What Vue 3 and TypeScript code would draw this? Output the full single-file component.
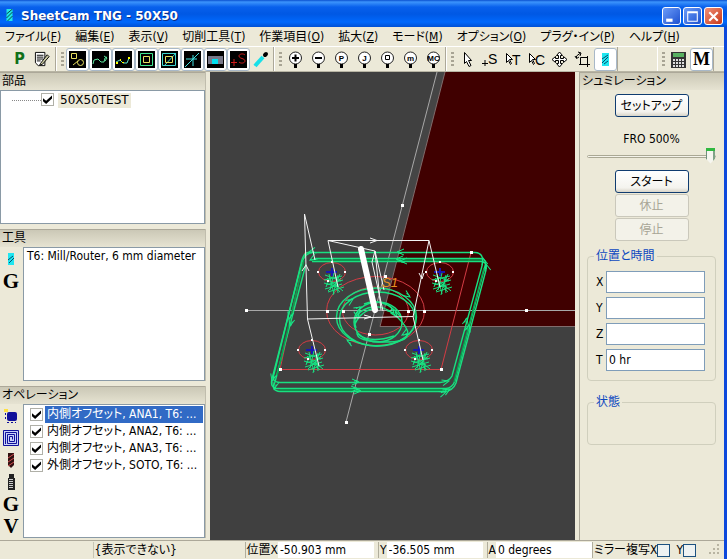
<script setup lang="ts">
import { ref } from 'vue'

interface MenuEntry { label: string; key: string }
interface Operation { label: string; on: boolean }

const menus: MenuEntry[] = [
  { label: 'ファイル', key: 'F' },
  { label: '編集', key: 'E' },
  { label: '表示', key: 'V' },
  { label: '切削工具', key: 'T' },
  { label: '作業項目', key: 'O' },
  { label: '拡大', key: 'Z' },
  { label: 'モード', key: 'M' },
  { label: 'オプション', key: 'O' },
  { label: 'プラグ・イン', key: 'P' },
  { label: 'ヘルプ', key: 'H' },
]
const toggles = ['shapes', 'path', 'pathpoints', 'offset', 'offsetcut', 'direction', 'material', 'start']
const zooms = ['+', '−', 'P', 'J', '□', 'm', 'MC']

const partOn = ref(true)
const selected = ref(0)
const operations = ref<Operation[]>([
  { label: '内側オフセット, ANA1, T6: ...', on: true },
  { label: '内側オフセット, ANA2, T6: ...', on: true },
  { label: '内側オフセット, ANA3, T6: ...', on: true },
  { label: '外側オフセット, SOTO, T6: ...', on: true },
])
const fro = ref(500)
const axes = ref([
  { name: 'X', value: '' },
  { name: 'Y', value: '' },
  { name: 'Z', value: '' },
  { name: 'T', value: '0 hr' },
])
const posX = ref('-50.903 mm')
const posY = ref('-36.505 mm')
const posA = ref('0 degrees')
const mirrorX = ref(false)
const mirrorY = ref(false)

const holes = [
  { x: 332, y: 272 },
  { x: 440, y: 272 },
  { x: 312, y: 350 },
  { x: 419, y: 350 },
]
const plunge =
  'M-7 3L9 9M-8 8L10 4M-6 13L11 8M-7 17L10 12M-4 20L12 15M-3 2L2 22M2 1L-2 18M6 3L1 23M9 6L-4 19M-5 6L8 20M-8 11L7 15M4 5L6 21M0 10L11 19M-2 5L-6 15M8 2L3 14'

// Arrow heads of the tool path: position and heading in degrees
const arrows = [
  { x: 397, y: 252, a: 180 }, { x: 396, y: 259, a: 180 }, { x: 400, y: 261, a: 180 },
  { x: 359, y: 382, a: 0 }, { x: 358, y: 389, a: 0 }, { x: 361, y: 391, a: 0 },
  { x: 449, y: 381, a: -15 }, { x: 450, y: 389, a: -30 }, { x: 446, y: 392, a: -20 },
  { x: 467, y: 318, a: -76 }, { x: 469, y: 325, a: -76 }, { x: 483, y: 258, a: -105 }, { x: 486, y: 264, a: -105 },
  { x: 289, y: 319, a: 104 }, { x: 290, y: 326, a: 104 }, { x: 272, y: 381, a: 104 }, { x: 274, y: 389, a: 104 },
  { x: 309, y: 252, a: 165 }, { x: 310, y: 260, a: 150 },
  { x: 353, y: 299, a: -35 }, { x: 347, y: 340, a: 210 }, { x: 410, y: 297, a: 35 },
  { x: 402, y: 335, a: 150 }, { x: 394, y: 313, a: 40 }, { x: 397, y: 317, a: 55 }, { x: 358, y: 318, a: 80 },
  { x: 361, y: 307, a: -30 },
]
const nodes = [
  [246, 310], [526, 310], [402, 205], [346, 422], [280, 369], [441, 369], [471, 252],
  [327, 311], [424, 311], [343, 311], [408, 311], [385, 276], [369, 334],
]
</script>

<template>
  <div class="window">
    <header class="title">
      <svg class="logo" viewBox="0 0 8 13"><path fill="#20e6e6" d="M1 0h6v12H1z" /><path stroke="#064a4a" fill="none" d="M1 5l6-5M1 9l6-6M2 12l5-5" /></svg>
      <h1>SheetCam TNG - 50X50</h1>
      <div class="caption">
        <button aria-label="最小化"><svg viewBox="0 0 16 16"><path fill="#fff" d="M3 10h6v3H3z" /></svg></button>
        <button aria-label="最大化"><svg viewBox="0 0 16 16"><path fill="none" stroke="#fff" d="M3.500 3.500h9v9h-9zM3 4.500h10" /></svg></button>
        <button class="close" aria-label="閉じる"><svg viewBox="0 0 16 16"><path fill="none" stroke="#fff" stroke-width="2" d="M4 4l8 8M12 4l-8 8" /></svg></button>
      </div>
    </header>

    <nav class="menu">
      <button v-for="m in menus" :key="m.label">{{ m.label }}(<u>{{ m.key }}</u>)</button>
    </nav>

    <div class="tools">
      <div class="bar first">
        <button class="tool post" aria-label="ポスト">P</button>
        <button class="tool" aria-label="編集">
          <svg viewBox="0 0 18 18"><path fill="#fff" stroke="#000" d="M1.500 1.500h10v14h-7l-3-3z" /><path stroke="#000" d="M3 4.500h7M3 6.500h7M3 8.500h7M3 10.500h4" /><path fill="#c8c8a0" stroke="#000" d="M7 13l7-9 2 2-7 8-3 1z" /></svg>
        </button>
      </div>
      <div class="bar">
        <i class="grip" />
        <button v-for="t in toggles" :key="t" class="tool on" :aria-label="t" aria-pressed="true">
          <svg viewBox="0 0 17 17">
            <path fill="#000" d="M0 0h17v17H0z" />
            <g v-if="t === 'shapes'" fill="none" stroke="#e8e060"><path d="M2.500 2.500h5v5h-5zM4 14l5-4" /><circle cx="11.500" cy="11.500" r="3" /></g>
            <g v-else-if="t === 'path'" fill="none" stroke="#60e8a0"><path d="M1 13l1-4 4-1 3 3h3l1-4 2-1M12 5l3 2-2 3" /></g>
            <g v-else-if="t === 'pathpoints'" fill="none" stroke="#60e8d0"><path d="M1 11l4-2 3 3h4l2-5" /><path fill="#ff0" stroke="none" d="M1 11h2v2H1zM5 8h1v2H5zM7 11h2v1H7zM13 6h2v2h-2z" /></g>
            <g v-else-if="t === 'offset'" fill="none"><path stroke="#40e890" d="M2.500 2.500h12v12h-12z" /><path stroke="#e8e060" d="M5.500 5.500h6v6h-6z" /></g>
            <g v-else-if="t === 'offsetcut'" fill="none"><path stroke="#40d8d0" d="M1.500 2.500h13v12h-13zM3 15L15 2" /><path stroke="#e8e060" d="M4.500 5.500h7v6h-7z" /></g>
            <path v-else-if="t === 'direction'" fill="none" stroke="#40e0e0" d="M1 16L15 2M2 8h7v7M9 4v4h4" />
            <g v-else-if="t === 'material'"><path fill="#778" d="M1 5h15v8H1z" /><path fill="#00e0f0" d="M5 8h6v5H5z" /></g>
            <g v-else stroke="#d01c1c" fill="none"><path d="M1 11.500h6M4 8v7M15 4c-2-2-6-1-6 1 0 3 6 2 6 5 0 2-4 3-6 1" /></g>
          </svg>
        </button>
        <button class="tool" aria-label="切断"><svg viewBox="0 0 17 17"><path stroke="#18e0e8" stroke-width="4" d="M2 15l8-9" /><path stroke="#000" stroke-width="4" stroke-linecap="round" d="M12 4l1-1" /></svg></button>
      </div>
      <div class="bar">
        <i class="grip" />
        <button v-for="z in zooms" :key="z" class="tool" :aria-label="'拡大 ' + z">
          <svg viewBox="0 0 17 17">
            <circle cx="8.500" cy="7" r="6" fill="#fff" stroke="#222" />
            <path fill="#000" d="M7 13h3v4H7z" />
            <path v-if="z === '+'" stroke="#000" stroke-width="2" d="M5 7h7M8.500 3.500v7" />
            <path v-else-if="z === '−'" stroke="#000" stroke-width="2" d="M5 7h7" />
            <path v-else-if="z === '□'" fill="none" stroke="#000" d="M6.500 4.500h4v4h-4z" />
            <text v-else x="8.500" y="10" class="lens">{{ z }}</text>
          </svg>
        </button>
      </div>
      <div class="bar">
        <i class="grip" />
        <button class="tool" aria-label="選択"><svg viewBox="0 0 17 17"><path fill="#fff" stroke="#000" d="M5.500 1.500v11l2-2 2.500 5 2-1-2.500-5h3z" /></svg></button>
        <button class="tool" aria-label="開始点"><svg viewBox="0 0 17 17"><path stroke="#000" d="M0 12.500h6M3 9v6" /><text x="6" y="13" class="glyph">S</text></svg></button>
        <button v-for="g in ['T', 'C']" :key="g" class="tool" :aria-label="'選択 ' + g"><svg viewBox="0 0 17 17"><path fill="#fff" stroke="#000" d="M1.500 2.500v9l2-2 2 4 1-1-2-4h3z" /><text x="7" y="14" class="glyph">{{ g }}</text></svg></button>
        <button class="tool" aria-label="移動"><svg viewBox="0 0 17 17"><path fill="#fff" stroke="#000" d="M8.500 1l3 3.500h-2v3h3v-2L16 8.500l-3.500 3v-2h-3v3h2l-3 3.500-3-3.500h2v-3h-3v2L1 8.500l3.500-3v2h3v-3h-2z" /></svg></button>
        <button class="tool" aria-label="回転"><svg viewBox="0 0 17 17"><path fill="none" stroke="#000" d="M6.500 6.500h7v7h-7zM5 13.500h11M13.500 5v11M2.500 7V5l4-3M1 5l1.500 2.500L5 6M4 1l3 1-1 3" /></svg></button>
        <button class="tool on" aria-label="工具" aria-pressed="true"><svg viewBox="0 0 17 17"><path fill="#20e6f0" d="M5 2h7v13H5z" /><path stroke="#064a6a" d="M5 8l6-4M5 12l6-6M7 13l4-3" /></svg></button>
      </div>
      <div class="bar last">
        <i class="grip" />
        <button class="tool" aria-label="計算機"><svg viewBox="0 0 17 17"><path fill="#333" d="M1 1h15v16H1z" /><path fill="#58b060" d="M3 2h11v4H3z" /><path stroke="#ddd" stroke-width="2" stroke-dasharray="2 1" d="M3 9h11M3 12h11M3 15h11" /></svg></button>
        <button class="tool on serif" aria-label="マクロ">M</button>
      </div>
    </div>

    <main class="body">
      <aside class="left">
        <section class="panel">
          <h2>部品</h2>
          <div class="box tree">
            <i class="branch" />
            <input id="part" v-model="partOn" type="checkbox" class="tick">
            <label for="part" class="leaf">50X50TEST</label>
          </div>
        </section>
        <section class="panel">
          <h2>工具</h2>
          <div class="split">
            <div class="rail">
              <button aria-label="新規工具"><svg viewBox="0 0 16 16"><path fill="#20e6f0" d="M5 2h6v12H5z" /><path stroke="#064a6a" d="M5 9l5-4M6 12l5-5" /></svg></button>
              <button class="serif">G</button>
            </div>
            <div class="box toollist">T6: Mill/Router, 6 mm diameter</div>
          </div>
        </section>
        <section class="panel">
          <h2>オペレーション</h2>
          <div class="split">
            <div class="rail">
              <button aria-label="輪郭"><svg viewBox="0 0 16 16"><rect x="4" y="4" width="10" height="9" rx="2" fill="#10109a" /><path fill="none" stroke="#10109a" stroke-dasharray="2 2" d="M2.500 5v8M4 14.500h9" /><path fill="#ffe040" d="M1 1h4v3H1z" /></svg></button>
              <button aria-label="ポケット"><svg viewBox="0 0 16 16"><path fill="#c8d0f8" stroke="#10109a" d="M.5.5h15v15H.5z" /><path fill="none" stroke="#10109a" d="M2.500 14V2.500h11v11h-9v-9h7v7h-5v-5h3v3" /></svg></button>
              <button aria-label="穴あけ"><svg viewBox="0 0 16 16"><path fill="#301010" d="M5 1h6v12l-3 3-3-3z" /><path stroke="#d05050" d="M5 6l6-4M5 10l6-4M5 14l6-4" /></svg></button>
              <button aria-label="ねじ切り"><svg viewBox="0 0 16 16"><path fill="#222" d="M6 0h5v4H6zM5 4h7v12H5z" /><path stroke="#ccc" d="M6 5.500h4M6 7.500h4M6 9.500h4M6 11.500h4M6 13.500h4" /></svg></button>
              <button class="serif">G</button>
              <button class="serif">V</button>
            </div>
            <ul class="box ops">
              <li v-for="(op, i) in operations" :key="op.label">
                <input v-model="op.on" type="checkbox" class="tick" :aria-label="op.label">
                <button :class="{ sel: i === selected }" @click="selected = i">{{ op.label }}</button>
              </li>
            </ul>
          </div>
        </section>
      </aside>

      <div class="view">
        <svg viewBox="210 72 365 468" preserveAspectRatio="xMidYMid slice">
          <path fill="#454545" d="M437 72h8L380 326l-6-14z" />
          <path fill="#400000" d="M445 72H575V326H380z" />
          <path fill="none" stroke="#806c6c" d="M445 72L380 326.500H575" />
          <g fill="none" stroke="#a8a8a8">
            <path d="M246 310.500H575M437 72L346 422" />
          </g>
          <g fill="none" stroke="#d43c44">
            <path d="M305 252.500H471L441 369.500H280z" />
            <ellipse cx="375.500" cy="311" rx="49" ry="34.500" />
            <ellipse cx="375.500" cy="311" rx="33" ry="24" />
            <ellipse v-for="(h, i) in holes" :key="i" :cx="h.x" :cy="h.y" rx="13.500" ry="9.500" />
          </g>
          <g fill="none" stroke="#18e080" stroke-width="1.400">
            <path d="M308 252.500H475Q485 253 482 266L452 376Q449 382 440 382.500H280Q271 382 274 374L301 264Q303 253 308 252.500z" />
            <path d="M314 258.500H480Q487 259 485 266L455 381Q452 388 446 388.500H276Q270 387 272 379L302 262Q305 253 314 252" />
            <path d="M312 261.500H481Q488 262 486 270L456 383Q453 391 444 391.500H280Q271 391 275 382L306 264" />
            <path stroke="#08a050" d="M280 390H448M310 260H484M277 376L304 260M454 382L484 268" />
            <ellipse cx="376.500" cy="317" rx="40" ry="29" />
            <ellipse cx="377.500" cy="319" rx="38" ry="27" />
            <ellipse cx="378" cy="322" rx="24" ry="20" />
            <path d="M356 328q-5-14 12-20t34 14-15 20-30-10M364 304q20-8 36 12M358 334q12 10 36 2M355 324q6-14 22-16" />
          </g>
          <g v-for="(h, i) in holes" :key="'p' + i" :transform="`translate(${h.x} ${h.y})`" fill="none">
            <path stroke="#1818b0" stroke-width="2" d="M-6 0H5M0-4V4" />
            <path stroke="#18e080" :d="plunge" />
            <path fill="#fff" d="M-15-1h2v2h-2zM12-1h2v2h-2zM-1-11h2v2h-2zM-5 8h2v2h-2z" />
          </g>
          <path v-for="(w, i) in arrows" :key="'a' + i" :transform="`translate(${w.x} ${w.y}) rotate(${w.a})`" fill="none" stroke="#18e888" d="M-7-3L0 0L-7 3M-5-1h4" />
          <g fill="none" stroke="#f4f4f4">
            <path d="M315 260L304.500 214L307.500 319L413 316.500L423 360M307.500 319L319 366M338 287L328 240.500H429L440 287M328 240.500L375 251L384 290M375 251L372 262L383 311M375 251L381 310M429 240.500L413 317" />
            <path d="M370 238l7 2.500-7 2.500M364 315l7 2-7 2M302 271l4-6 3 6M424 273l-2 6-3-6" />
            <path stroke="#fff" stroke-width="6" stroke-linecap="round" d="M361 249L375 310" />
          </g>
          <text x="382" y="287" class="origin">S1</text>
          <rect v-for="(n, i) in nodes" :key="'n' + i" :x="n[0] - 1" :y="n[1] - 1" width="3" height="3" fill="#fff" />
        </svg>
      </div>

      <aside class="right">
        <h2>シュミレーション</h2>
        <div class="sim">
          <button class="push">セットアップ</button>
          <label for="fro" class="fro">FRO {{ fro }}%</label>
          <input id="fro" v-model="fro" type="range" min="0" max="500">
          <div class="stack">
            <button class="push">スタート</button>
            <button class="push" disabled>休止</button>
            <button class="push" disabled>停止</button>
          </div>
          <fieldset class="pos">
            <legend>位置と時間</legend>
            <div v-for="a in axes" :key="a.name" class="axis">
              <label :for="'axis' + a.name">{{ a.name }}</label>
              <input :id="'axis' + a.name" v-model="a.value" type="text">
            </div>
          </fieldset>
          <fieldset class="state">
            <legend>状態</legend>
          </fieldset>
        </div>
      </aside>
    </main>

    <footer class="status">
      <span class="hint">{表示できない}</span>
      <label for="sx">位置X</label><input id="sx" v-model="posX" type="text">
      <label for="sy">Y</label><input id="sy" v-model="posY" type="text">
      <label for="sa">A</label><input id="sa" v-model="posA" type="text">
      <label for="mx">ミラー複写X</label><input id="mx" v-model="mirrorX" type="checkbox" class="tick">
      <label for="my" class="my">Y</label><input id="my" v-model="mirrorY" type="checkbox" class="tick">
      <svg class="size" viewBox="0 0 12 12"><path fill="#b8b4a2" d="M9 0h2v2H9zM9 4h2v2H9zM5 4h2v2H5zM9 8h2v2H9zM5 8h2v2H5zM1 8h2v2H1z" /></svg>
    </footer>
  </div>
</template>

<style>
body { margin: 0; }
</style>

<style scoped>
.window {
  display: grid;
  grid-template-rows: 27px 19px 26px 1fr 19px;
  box-sizing: border-box;
  min-height: 100vh;
  border-right: 3px solid #0c48dc;
  background: #ece9d8;
  color: #000;
  font-family: "DejaVu Sans Condensed", "Noto Sans CJK JP", sans-serif;
  font-size: 12px;
  line-height: 16px;
  font-feature-settings: "palt";
}
* { box-sizing: border-box; }
button, input { margin: 0; padding: 0; font: inherit; color: inherit; font-feature-settings: inherit; }
button { border: 0; background: none; white-space: nowrap; }
h1, h2 { margin: 0; font-size: 12px; font-weight: normal; }
svg { display: block; }

.title {
  display: flex;
  align-items: center;
  gap: 7px;
  margin-right: -3px;
  padding: 4px 4px 0 5px;
  background: linear-gradient(#0a50d0 0, #3c94fc 2px, #0860ec 7px, #0058e4 14px, #0068fc 22px, #0050d4 27px);
  color: #fff;
}
.title h1 { flex: 1; font-family: "DejaVu Sans", sans-serif; font-weight: bold; text-shadow: 1px 1px #0a2a80; }
.logo { width: 9px; height: 13px; }
.caption { display: flex; gap: 2px; }
.caption button {
  width: 19px;
  height: 18px;
  border: 1px solid #fff;
  border-radius: 3px;
  background: linear-gradient(135deg, #6c9cf8, #1c50d0);
}
.caption .close { background: linear-gradient(135deg, #f09078, #c83818); }

.menu { display: flex; gap: 14px; padding: 0 5px; background: #ece9d8; }
.menu button { line-height: 18px; }

.tools { display: flex; border-top: 1px solid #fff; border-bottom: 1px solid #b8b5a4; }
.bar { display: flex; align-items: center; border-right: 1px solid #aca899; }
.bar + .bar { border-left: 1px solid #fff; }
.first { padding: 0 1px 0 8px; }
.bar.last { margin-left: auto; margin-right: 10px; }
.grip { width: 3px; height: 15px; margin: 0 2px 0 4px; background: repeating-linear-gradient(#a8a494 0 2px, transparent 2px 4px); }
.tool { width: 23px; height: 23px; display: grid; place-items: center; }
.tool svg { width: 17px; height: 17px; }
.on { border: 1px solid #a8b8c8; border-radius: 3px; background: #fff; }
.post { color: #107018; font-size: 16px; font-weight: bold; }
.serif { font-family: "Liberation Serif", serif; font-size: 18px; font-weight: bold; }
.lens { font: bold 8px "Liberation Sans", sans-serif; text-anchor: middle; }
.glyph { font: 14px "Liberation Sans", sans-serif; }

.body { display: grid; grid-template-columns: 206px 1fr 145px; column-gap: 4px; }
.left { display: grid; grid-template-rows: repeat(3, 1fr); gap: 5px; padding-bottom: 2px; }
.panel { display: grid; grid-template-rows: 18px 1fr; border-right: 1px solid #c0bdad; }
h2 { height: 18px; padding-left: 2px; border-top: 1px solid #aca899; background: linear-gradient(#cbc8b6, #e6e3d2); line-height: 16px; }
.box { margin: 0; border: 1px solid #8a9aa6; background: #fff; }
.split { display: grid; grid-template-columns: 23px 1fr; }
.rail { display: flex; flex-direction: column; gap: 6px; padding-top: 4px; }
.rail button { width: 22px; height: 16px; display: grid; place-items: center; }
.rail svg { width: 16px; height: 16px; }
.rail .serif { font-size: 21px; line-height: 16px; }
.tree { display: flex; align-items: flex-start; padding: 2px 11px; }
.branch { width: 29px; margin-top: 7px; border-top: 1px dotted #888; }
.leaf { margin-left: 4px; padding: 0 2px; background: #ece9d8; font-family: "DejaVu Sans", sans-serif; line-height: 15px; }
.toollist { padding-left: 3px; }
.ops { list-style: none; padding: 1px; }
.ops li { display: flex; align-items: center; gap: 2px; height: 17px; padding-left: 5px; }
.ops button { flex: 1; height: 17px; padding-left: 2px; overflow: hidden; line-height: 17px; text-align: left; }
.ops .sel { background: #316ac5; color: #fff; }

.tick { appearance: none; flex: none; width: 13px; height: 13px; border: 1px solid #b0b0a8; background: #fff; }
.tick:checked::before {
  content: "";
  display: block;
  width: 9px;
  height: 9px;
  margin: 1px;
  background: #000;
  clip-path: polygon(0 35%, 35% 65%, 100% 5%, 100% 40%, 35% 100%, 0 70%);
}

.view { position: relative; background: #404040; }
.view svg { position: absolute; width: 100%; height: 100%; }
.origin { fill: #e89020; font: italic 13px "Liberation Sans", sans-serif; }

.right { border-left: 1px solid #aca899; }
.sim { display: flex; flex-direction: column; padding: 4px 8px 4px 7px; }
.push {
  align-self: center;
  width: 74px;
  height: 23px;
  border: 1px solid #103c70;
  border-radius: 3px;
  background: linear-gradient(#fff, #f4f3ee 80%, #d8d4c8);
}
.push:disabled { border-color: #cac8bb; background: #f3f2e9; color: #a8a596; }
.fro { margin-top: 14px; text-align: center; }
#fro { appearance: none; width: 100%; height: 18px; background: none; }
#fro::-webkit-slider-runnable-track { height: 3px; border: 1px solid #aaa894; border-radius: 2px; background: #f4f3ea; }
#fro::-webkit-slider-thumb {
  appearance: none;
  width: 9px;
  height: 16px;
  margin-top: -8px;
  background: linear-gradient(#30b840 3px, transparent 3px), linear-gradient(90deg, #70907c 1px, #f6f6f0 1px 7px, #80a488 7px);
  clip-path: polygon(0 0, 100% 0, 100% 70%, 50% 100%, 0 70%);
}
.stack { display: grid; justify-content: center; gap: 1px; margin-top: 5px; }
fieldset { min-width: 0; margin: 0; padding: 0 10px 0 8px; border: 1px solid #d0cfbd; border-radius: 4px; }
legend { padding: 0 2px; margin-left: -2px; color: #0c48c0; }
.pos { margin-top: 7px; padding-bottom: 9px; }
.axis { display: flex; align-items: center; height: 22px; margin-bottom: 4px; }
.axis:last-child { margin-bottom: 0; }
.axis:first-of-type { margin-top: 7px; }
.axis label { width: 10px; }
.axis input { flex: 1; min-width: 0; height: 22px; padding: 0 2px; border: 1px solid #7f9db9; background: #fff; }
.state { height: 51px; margin-top: 13px; }

.status { display: flex; align-items: center; padding-right: 4px; border-top: 1px solid #aca899; line-height: 16px; }
.hint { width: 152px; margin-left: auto; padding-left: 1px; border-left: 1px solid #c8c5b4; }
.status label { padding-left: 1px; border-left: 1px solid #b0ad9c; white-space: nowrap; }
.status input[type="text"] { width: 96px; height: 16px; margin-right: 4px; padding: 0 2px; border: 0; background: #fff; }
.status #sa { margin-right: 0; }
.status .tick { border-color: #1c5180; background: #eef2f2; }
.status .my { margin-left: 5px; border: 0; }
.size { width: 12px; height: 12px; margin-left: 12px; }
</style>
